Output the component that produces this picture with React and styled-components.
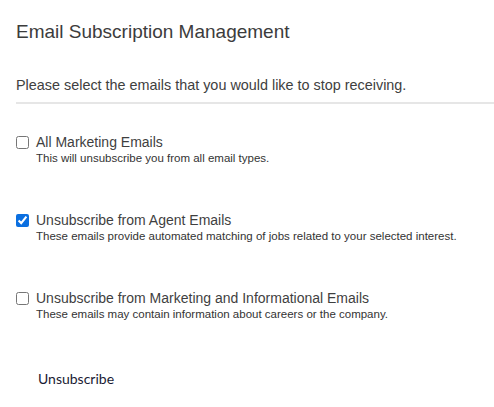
import React from 'react';
import styled, { createGlobalStyle } from 'styled-components';

const GlobalStyle = createGlobalStyle`
  body {
    margin: 0;
    background: #fff;
    font-family: "Liberation Sans", Arial, sans-serif;
  }
`;

const Page = styled.div`
  padding: 20px 0 0 16px;
  color: #404040;
`;

const Title = styled.h1`
  margin: 0;
  font-size: 19px;
  font-weight: normal;
  line-height: 24px;
  color: #3c3c3c;
`;

const Intro = styled.p`
  margin: 32px 0 0;
  font-size: 14.4px;
  line-height: 18px;
  padding-bottom: 8px;
  border-bottom: 2px solid #e6e6e6;
`;

const OptionList = styled.div`
  display: flex;
  flex-direction: column;
  gap: 45px;
  padding-top: 29px;
`;

const Option = styled.label`
  display: grid;
  grid-template-columns: 13px 1fr;
  column-gap: 7px;
  align-items: center;
`;

const Box = styled.input`
  margin: 0;
  width: 13px;
  height: 13px;
  accent-color: #0b6fe0;
`;

const Label = styled.span`
  font-size: 14px;
  line-height: 18px;
  color: #3f3f3f;
`;

const Hint = styled.span`
  grid-column: 2;
  font-size: 11.5px;
  line-height: 15px;
  color: #333;
`;

const Button = styled.button`
  margin: 48px 0 0 22px;
  padding: 0;
  border: none;
  background: transparent;
  font-family: Lato, "Liberation Sans", sans-serif;
  font-size: 14px;
  color: #1a1a33;
  cursor: pointer;
`;

const options = [
  { title: 'All Marketing Emails', hint: 'This will unsubscribe you from all email types.', checked: false },
  { title: 'Unsubscribe from Agent Emails', hint: 'These emails provide automated matching of jobs related to your selected interest.', checked: true },
  { title: 'Unsubscribe from Marketing and Informational Emails', hint: 'These emails may contain information about careers or the company.', checked: false },
];

export default function App() {
  return (
    <>
      <GlobalStyle />
      <Page>
        <Title>Email Subscription Management</Title>
        <Intro>Please select the emails that you would like to stop receiving.</Intro>
        <OptionList>
          {options.map(o => (
            <Option key={o.title}>
              <Box type="checkbox" defaultChecked={o.checked} />
              <Label>{o.title}</Label>
              <Hint>{o.hint}</Hint>
            </Option>
          ))}
        </OptionList>
        <Button>Unsubscribe</Button>
      </Page>
    </>
  );
}
